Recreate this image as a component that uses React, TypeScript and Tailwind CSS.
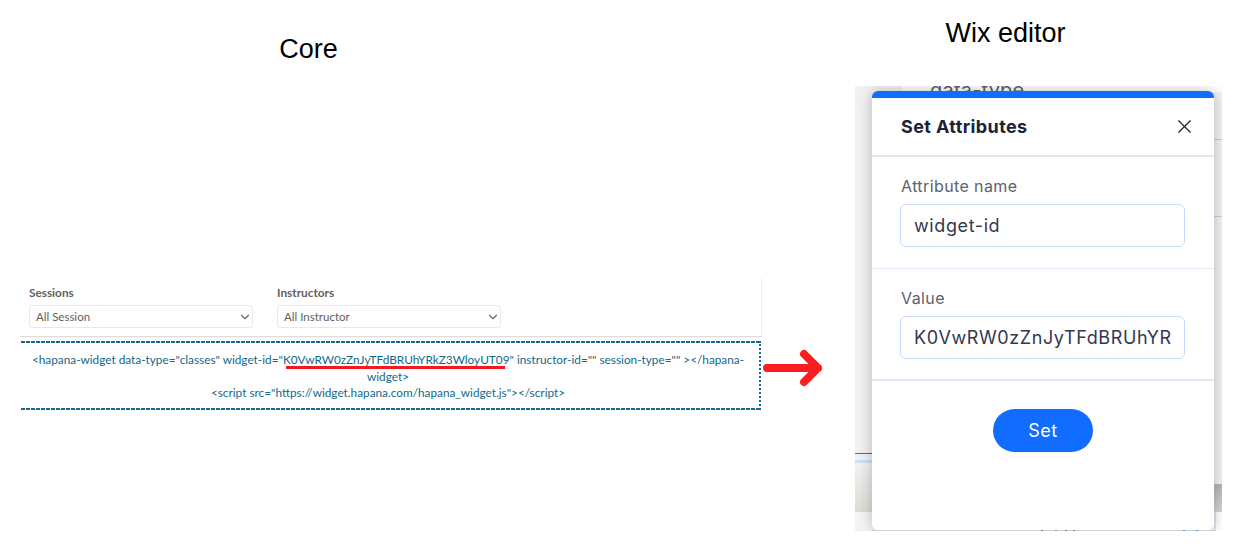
import { ChevronDown, X } from "lucide-react";

const specks = [
  { left: "left-[186px]", color: "bg-[#777777]" },
  { left: "left-[200px]", color: "bg-[#999999]" },
  { left: "left-[210px]", color: "bg-[#777777]" },
  { left: "left-[218px]", color: "bg-[#888888]" },
  { left: "left-[328px]", color: "bg-[#5b8fdc]" },
  { left: "left-[341px]", color: "bg-[#5b8fdc]" },
];

function Dropdown({ label, value }: { label: string; value: string }) {
  return (
    <div className="w-[224px]">
      <div className="text-[11.8px] leading-[14px] font-bold text-[#5f5f5f]">{label}</div>
      <div className="mt-[5px] h-[23px] flex items-center justify-between pl-[6px] border border-[#e8e8e8] rounded-[3px] text-[11.5px] text-[#5e5e5e]">
        <span>{value}</span>
        <ChevronDown className="w-[14px] h-[14px] text-[#666666]" strokeWidth={2} />
      </div>
    </div>
  );
}

function Field({ label, value }: { label: string; value: string }) {
  return (
    <div className="pl-[28px]">
      <div className="pl-[1px] text-[16px] leading-[20px] tracking-[0.4px] text-[#5c6170]">{label}</div>
      <div className="mt-[8px] w-[285px] h-[43px] flex items-center px-[13px] border border-[#c5dafb] rounded-[6px] text-[18px] tracking-[0.6px] text-[#33384d]">
        <span className="block overflow-hidden whitespace-nowrap">{value}</span>
      </div>
    </div>
  );
}

export default function App() {
  return (
    <div className="w-[1236px] h-[553px] bg-white flex overflow-hidden font-['Liberation_Sans',sans-serif]">
      {/* core side */}
      <div className="w-[855px] shrink-0 flex flex-col">
        <h2 className="w-[617px] mt-[33px] text-center text-[27px] leading-[32px] text-black">Core</h2>
        <div className="ml-[20px] mt-[213px] w-[742px] font-['Lato',sans-serif]">
          <div className="h-[59px] pt-[8px] pl-[9px] flex gap-[24px] border-r border-b border-r-[#efefef] border-b-[#dcdcdc]">
            <Dropdown label="Sessions" value="All Session" />
            <Dropdown label="Instructors" value="All Instructor" />
          </div>
          <div className="w-[740px] h-[69px] ml-[1px] mt-[4px] flex flex-col border-r-2 border-dotted border-[#14688f]">
            <div className="h-[2px] shrink-0 bg-[repeating-linear-gradient(90deg,#14688f_0_4px,transparent_4px_5px)]" />
            <div className="flex-1 pt-[9px] pl-[6px] pr-[10px] text-center text-[11.8px] leading-[16.5px] text-[#11698a]">
              <div>
                {'<hapana-widget data-type="classes" widget-id="'}
                <span className="relative">
                  K0VwRW0zZnJyTFdBRUhYRkZ3WloyUT09
                  <span className="absolute left-[3px] right-[4px] top-[14px] h-[2.5px] bg-[#f01a20]" />
                </span>
                {'" instructor-id="" session-type="" ></hapana-widget>'}
              </div>
              <div>{'<script src="https://widget.hapana.com/hapana_widget.js"></script>'}</div>
            </div>
            <div className="h-[2px] shrink-0 bg-[repeating-linear-gradient(90deg,#14688f_0_4px,transparent_4px_5px)]" />
          </div>
        </div>
      </div>

      {/* wix side */}
      <div className="relative w-[367px] shrink-0 flex flex-col items-center">
        <h2 className="mt-[17px] w-[300px] ml-[-66px] text-center text-[27px] leading-[32px] text-black">Wix editor</h2>
        <svg className="absolute left-[-93px] top-[347px]" width="62" height="44" viewBox="0 0 62 44" fill="none">
          <path d="M5 21H56M42 7L56 21L42 35" stroke="#fd1c20" strokeWidth="8" strokeLinecap="round" strokeLinejoin="round" />
        </svg>
        <div className="relative mt-[37px] w-[367px] h-[445px] bg-[#f1f1f1] overflow-hidden">
          {/* editor behind the modal */}
          <div className="absolute left-[47px] right-0 top-0 h-[6px] bg-white" />
          <div className="absolute left-[75px] top-[-8px] text-[20px] leading-[24px] tracking-[0.2px] text-[#5a5f6e] font-['Inter',sans-serif]">data-type</div>
          <div className="absolute right-0 top-[53px] w-[8px] h-px bg-[#cccccc]" />
          <div className="absolute right-0 top-[130px] w-[8px] h-px bg-[#cccccc]" />
          <div className="absolute left-0 top-[367px] w-[17px] h-px bg-[#3a6fc4]" />
          <div className="absolute left-0 top-[374px] w-[17px] h-[3px] bg-[#cfdff2]" />
          <div className="absolute left-0 top-[377px] w-[17px] h-[49px] bg-gradient-to-b from-[#f3f1ef] to-[#dedbd7]" />
          <div className="absolute left-0 top-[426px] w-[17px] h-[18px] bg-[#f4f4f6]" />
          <div className="absolute right-0 top-[398px] w-[8px] h-[28px] bg-gradient-to-b from-[#b4b4b4] to-[#d6d6d6]" />
          <div className="absolute right-0 top-[426px] w-[8px] h-[19px] bg-white border-l-2 border-[#dde6f4]" />
          <div className="absolute left-[17px] top-[5px] w-[342px] h-[439px] bg-white rounded-[6px] shadow-[0_0_14px_rgba(0,0,0,0.25)] overflow-hidden flex flex-col font-['Inter',sans-serif]">
            <div className="h-[7px] shrink-0 bg-[#116dff]" />
            <div className="h-[59px] shrink-0 flex items-center justify-between pl-[29px] pr-[18px] border-b-2 border-[#e2e7ed]">
              <span className="text-[18px] font-bold tracking-[0.4px] text-[#1a2238]">Set Attributes</span>
              <X className="w-[23px] h-[23px] text-[#1a2238]" strokeWidth={1.2} />
            </div>
            <div className="h-[112px] shrink-0 pt-[19px] border-b border-[#dfe8f5]">
              <Field label="Attribute name" value="widget-id" />
            </div>
            <div className="h-[112px] shrink-0 pt-[19px] border-b-2 border-[#dfe8f5]">
              <Field label="Value" value="K0VwRW0zZnJyTFdBRUhYRkZ3WloyUT09" />
            </div>
            <div className="flex justify-center pt-[28px]">
              <button className="w-[100px] h-[43px] rounded-full bg-[#116dff] text-white text-[18px] tracking-[0.5px]">Set</button>
            </div>
          </div>
          <div className="absolute left-[17px] top-[444px] w-[342px] h-px bg-[#cfcfcf]" />
          {specks.map((s) => (
            <div key={s.left} className={`absolute top-[444px] w-[2px] h-px ${s.left} ${s.color}`} />
          ))}
        </div>
      </div>
    </div>
  );
}
